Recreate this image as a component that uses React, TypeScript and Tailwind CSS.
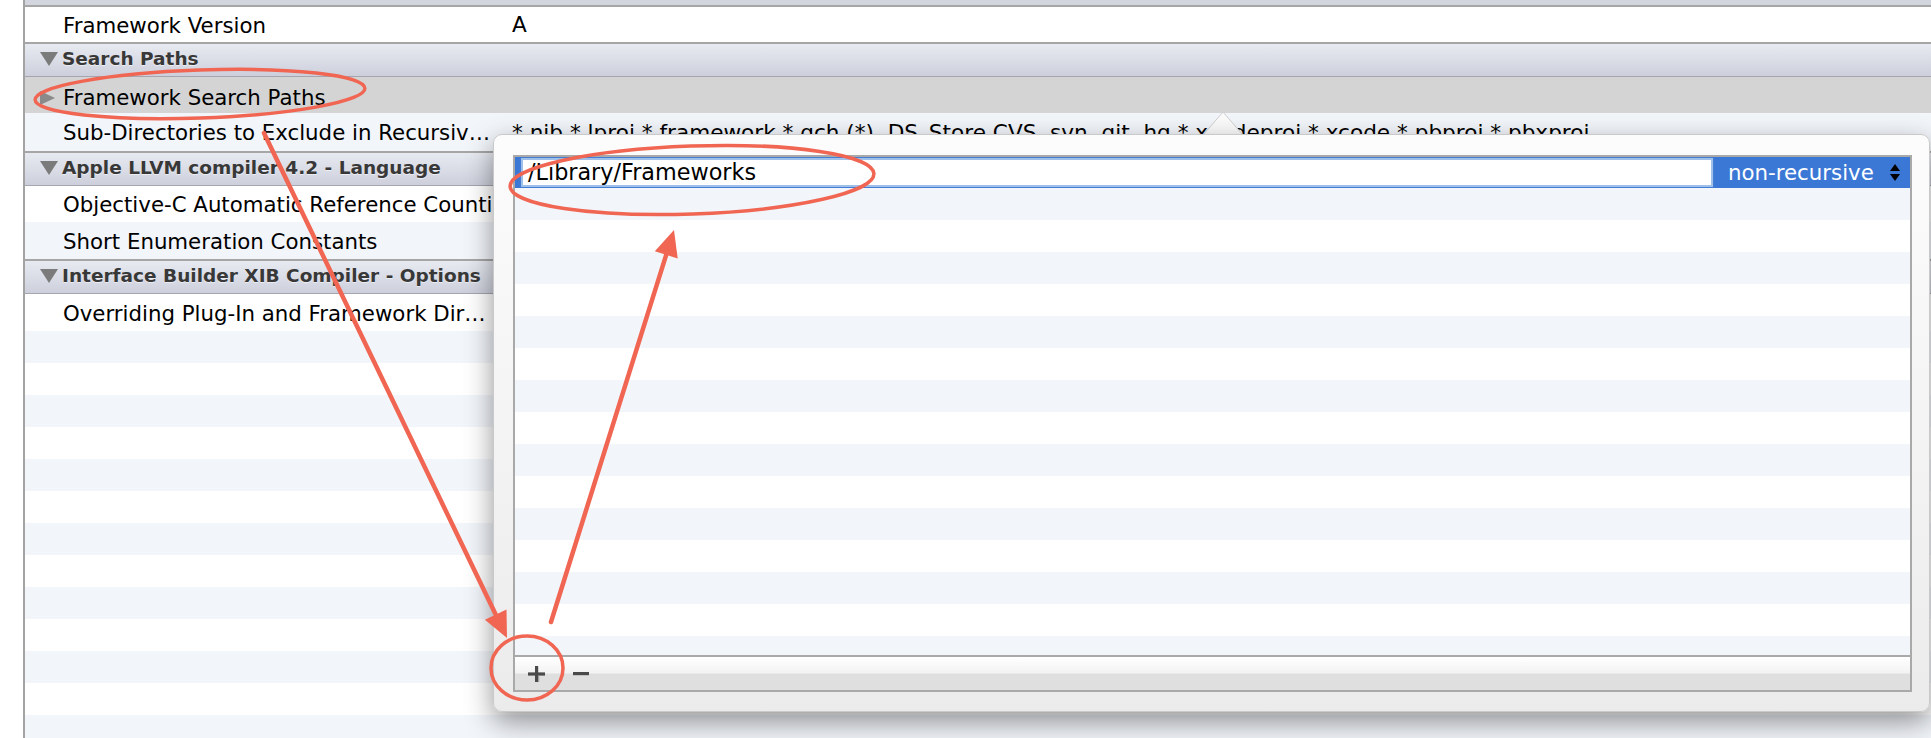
import React from "react";

const FONT = "font-['DejaVu_Sans',sans-serif]";

function Tri({ down }: { down: boolean }) {
  return down ? (
    <svg width="18" height="14" viewBox="0 0 18 14" className="flex-none">
      <polygon points="0,0 18,0 9,14" fill="#7b7b7b" />
    </svg>
  ) : (
    <svg width="15" height="14" viewBox="0 0 15 14" className="flex-none">
      <polygon points="0,0 15,7 0,14" fill="#8a8a8a" />
    </svg>
  );
}

function Header({ title }: { title: string }) {
  return (
    <div className="h-[35px] flex-none flex items-center border-t-2 border-b border-t-[#a6a6a6] border-b-[#a4a5ae] bg-[linear-gradient(#e8eaf1,#cdd0dc)] pl-[15px] pb-[2px] gap-[4px]">
      <Tri down />
      <span className="text-[18.5px] font-bold text-[#383838] whitespace-nowrap [text-shadow:0_1px_0_rgba(255,255,255,0.55)]">
        {title}
      </span>
    </div>
  );
}

function Row({
  name,
  value,
  h,
  bg,
}: {
  name: string;
  value?: string;
  h: string;
  bg: string;
}) {
  return (
    <div className={`${h} ${bg} flex-none flex items-center pt-[2px] text-[21.3px] text-black whitespace-nowrap`}>
      <span className="w-[487px] flex-none pl-[38px] overflow-hidden">{name}</span>
      {value && <span className="text-[21.6px]">{value}</span>}
    </div>
  );
}

function Plus() {
  return (
    <svg width="17" height="16" viewBox="0 0 17 16" className="flex-none">
      <rect x="7" y="0" width="3.2" height="16" fill="#4a4a4a" />
      <rect x="0" y="6.4" width="17" height="3.2" fill="#4a4a4a" />
      <rect x="10.2" y="9.6" width="1" height="6.4" fill="#9a9a9a" />
    </svg>
  );
}

function Minus() {
  return (
    <svg width="16" height="4" viewBox="0 0 16 4" className="flex-none">
      <rect x="0" y="0" width="16" height="3.2" fill="#4a4a4a" />
    </svg>
  );
}

export default function App() {
  const stripes = Array.from({ length: 13 }, (_, i) => i);
  const innerStripes = Array.from({ length: 15 }, (_, i) => i);
  return (
    <div className={`relative w-[1931px] h-[738px] overflow-hidden bg-white ${FONT}`}>
      <div className="flex h-full">
        <div className="w-[25px] flex-none bg-white border-r-2 border-[#a3a3a3]" />
        <div className="flex-1 flex flex-col min-w-0">
          <div className="h-[7px] flex-none border-b-2 border-[#a6a6a6] bg-[#d3d5df]" />
          <Row name="Framework Version" value="A" h="h-[35px]" bg="bg-white" />
          <Header title="Search Paths" />
          <div className="h-[36px] flex-none bg-[#d4d4d4] flex items-center pt-[6px] text-[21.3px] text-black whitespace-nowrap pl-[15px] gap-[8px]">
            <Tri down={false} />
            <span>Framework Search Paths</span>
          </div>
          <Row
            name="Sub-Directories to Exclude in Recursiv…"
            value="*.nib *.lproj *.framework *.gch (*) .DS_Store CVS .svn .git .hg *.xcodeproj *.xcode *.pbproj *.pbxproj"
            h="h-[38px]"
            bg="bg-[#f2f5fa]"
          />
          <Header title="Apple LLVM compiler 4.2 - Language" />
          <div className="h-[36px] flex-none bg-white flex items-center pt-[2px] text-[21.3px] text-black whitespace-nowrap pl-[38px]">
            Objective-C Automatic Reference Counting
          </div>
          <Row name="Short Enumeration Constants" h="h-[37px]" bg="bg-[#f2f5fa]" />
          <Header title="Interface Builder XIB Compiler - Options" />
          <Row name="Overriding Plug-In and Framework Dir…" h="h-[37px]" bg="bg-white" />
          {stripes.map((i) => (
            <div
              key={i}
              className={`h-[32px] flex-none ${i % 2 === 0 ? "bg-[#f2f5fa]" : "bg-white"}`}
            />
          ))}
        </div>
      </div>

      {/* popover arrow */}
      <svg
        className="absolute left-[1203px] top-[111px]"
        width="40"
        height="25"
        viewBox="0 0 40 25"
      >
        <polygon points="0,24 20,1 40,24" fill="#fbfbfb" stroke="#cfcfcf" strokeWidth="1" />
        <rect x="0" y="23" width="40" height="2" fill="#fbfbfb" />
      </svg>

      {/* popover */}
      <div className="absolute left-[493px] top-[134px] w-[1437px] h-[578px] rounded-[9px] border border-[#c9c9c9] bg-[linear-gradient(#fcfcfc,#f2f2f2_60%,#ebebeb)] shadow-[0_10px_28px_rgba(0,0,0,0.42)] pt-[20px] pl-[19px] pr-[17px] pb-[19px]">
        <div className="h-full flex flex-col border-2 border-[#a9a9a9] bg-white overflow-hidden">
          <div className="flex-1 flex flex-col overflow-hidden min-h-0">
            <div className="h-[31px] flex-none bg-[#3b78d6] flex items-stretch text-[21.3px] whitespace-nowrap">
              <div className="ml-[6px] mt-[1px] mb-[1px] w-[1192px] flex-none bg-white border-2 border-[#9fc0e8] shadow-[0_0_3px_rgba(90,140,210,0.7)] flex items-center pl-[5px] text-[22.3px] text-black">
                /Library/Frameworks
              </div>
              <div className="flex-1 flex items-center pl-[15px] text-white">non-recursive</div>
              <div className="flex flex-col justify-center items-center gap-[3px] pr-[10px]">
                <svg width="10" height="7" viewBox="0 0 10 7">
                  <polygon points="0,7 5,0 10,7" fill="#000" />
                </svg>
                <svg width="10" height="7" viewBox="0 0 10 7">
                  <polygon points="0,0 10,0 5,7" fill="#000" />
                </svg>
              </div>
            </div>
            {innerStripes.map((i) => (
              <div
                key={i}
                className={`h-[32px] flex-none ${i % 2 === 0 ? "bg-[#f2f5fa]" : "bg-white"}`}
              />
            ))}
          </div>
          <div className="h-[35px] flex-none border-t-2 border-[#a9a9a9] bg-[linear-gradient(#ffffff,#f3f3f3_48%,#dfdfdf_52%,#dfdfdf)] flex items-center pl-[13px] gap-[28px]">
            <Plus />
            <Minus />
          </div>
        </div>
      </div>

      {/* annotations */}
      <svg
        className="absolute inset-0 pointer-events-none"
        width="1931"
        height="738"
        viewBox="0 0 1931 738"
      >
        <g fill="none" stroke="#f06653" strokeWidth="3.5">
          <ellipse cx="200" cy="94" rx="165" ry="24" transform="rotate(-2 200 94)" />
          <ellipse cx="692" cy="180" rx="182" ry="34" transform="rotate(-2 692 180)" />
          <ellipse cx="527" cy="668" rx="36" ry="32" />
        </g>
        <g stroke="#f06653" strokeWidth="4.5" strokeLinecap="round">
          <line x1="264" y1="133" x2="495.7" y2="614.6" />
          <line x1="551" y1="622" x2="666.2" y2="254.8" />
        </g>
        <g fill="#f06653">
          <polygon points="507,638 506.5,609.4 484.9,619.8" />
          <polygon points="674,230 677.7,258.4 654.8,251.2" />
        </g>
      </svg>
    </div>
  );
}
